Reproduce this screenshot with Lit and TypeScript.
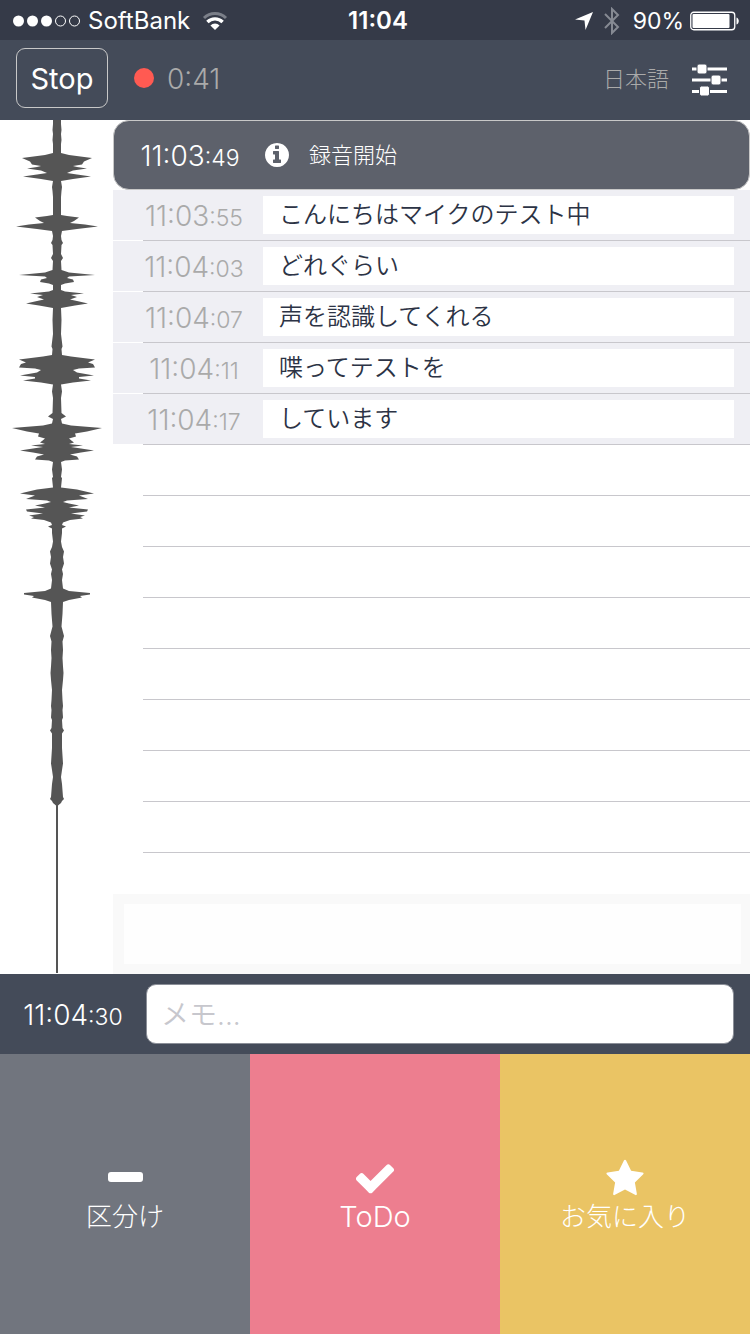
import { LitElement, html, css, svg } from "lit";
import { customElement, property, state } from "lit/decorators.js";

/* Amplitude envelope of the recording: [offset from the top, half width]. */
const ENVELOPE: [number, number][] = [
  [0, 4], [4, 4], [10, 4.5], [14, 4], [20, 4.5], [24, 4], [33, 4], [35, 12], [38, 35], [41.5, 27], [44.5, 25], [46, 16],
  [47, 20], [48.5, 30], [50.5, 16], [53, 10], [54.5, 20], [56.5, 34], [59, 16], [61, 4], [67, 5], [71, 4.5],
  [77, 4], [95, 4], [96, 10], [97.5, 22], [101, 17], [103, 13], [104.5, 28], [106.5, 41], [109, 20],
  [111, 5], [116, 4], [120, 4.5], [123, 6], [125, 4.5], [134, 4], [138, 6], [141, 4], [150, 4.5], [152.5, 12], [155, 38], [156.5, 12],
  [158, 10], [159.5, 16], [162, 17], [163.5, 8], [165, 4], [170, 4], [171.5, 8], [173.5, 27], [175, 14],
  [177, 20], [179.5, 13], [181, 20], [183.5, 31], [185.5, 18], [188, 4], [200, 4.5], [214, 4], [226.5, 5.5],
  [229, 4.5], [235, 5], [236.5, 14], [239.5, 38], [242.5, 31], [244, 36], [247.5, 38], [248.5, 22], [250, 16],
  [252.5, 20], [255.5, 37], [257, 22], [258.5, 22], [260.5, 34], [262.5, 16], [264.5, 4], [271.5, 5],
  [278, 4], [293, 4.5], [296.5, 9], [299, 4], [303.5, 5], [305.5, 14], [308, 45], [311.5, 30], [313.5, 18],
  [316.5, 19], [318.5, 12], [321, 15], [322.5, 17], [324, 12], [325.5, 26], [327, 14], [328.5, 24],
  [330.5, 37], [332.5, 24], [334.5, 13], [336.5, 20], [339.5, 22], [340.5, 8], [342, 4], [349.5, 5],
  [357, 4], [358, 5], [367.5, 4], [369.5, 20], [373.5, 37], [375.5, 22], [379, 31], [380.5, 10],
  [382, 6], [383.5, 12], [385.5, 22], [387.5, 12], [389.5, 31], [391.5, 30], [393.5, 14], [395.5, 28],
  [397, 23], [398.5, 26], [400, 13], [402.5, 6], [405, 5], [406.5, 9], [408.5, 5], [413, 5], [421.5, 4],
  [427, 5], [431.5, 7], [437, 6], [443.5, 7], [449.5, 5], [454, 6], [460, 5], [468.5, 6], [471, 12], [473, 33],
  [474.5, 33], [476, 23], [477.5, 25], [480, 12], [482, 6], [494, 5.5], [506.5, 4.5], [516, 7], [521.5, 5.5],
  [530, 6], [538, 5.5], [546.5, 6], [553, 6.5], [560, 6], [570, 5], [580, 5.5], [586, 6], [590, 5.5], [597.5, 6], [600, 5],
  [608, 5.5], [610.5, 7], [613.5, 5], [628, 5], [643.5, 6], [650, 5], [657, 4], [664, 5], [677, 6], [679, 7],
  [681, 5], [683, 4], [685.5, 1], [687, 1],
];

const envelopePoints = [
  ...ENVELOPE.map(([y, half]) => `${57 - half},${y}`),
  ...[...ENVELOPE].reverse().map(([y, half]) => `${57 + half},${y}`),
].join(" ");

const CHECK =
  "M1671 566q0 40-28 68l-724 724-136 136q-28 28-68 28t-68-28l-136-136-362-362q-28-28-28-68t28-68l136-136q28-28 68-28t68 28l294 295 656-657q28-28 68-28t68 28l136 136q28 28 28 68z";
const STAR =
  "M1728 647q0 22-26 48l-363 354 86 500q1 7 1 20 0 21-10.5 35.5t-30.5 14.5q-19 0-40-12l-449-236-449 236q-22 12-40 12-21 0-31.5-14.5t-10.5-35.5q0-6 2-20l86-500-364-354q-25-27-25-48 0-37 56-46l502-73 225-455q19-41 49-41t49 41l225 455 502 73q56 9 56 46z";
const INFO =
  "M1152 1376v-160q0-14-9-23t-23-9h-96v-512q0-14-9-23t-23-9h-320q-14 0-23 9t-9 23v160q0 14 9 23t23 9h96v320h-96q-14 0-23 9t-9 23v160q0 14 9 23t23 9h448q14 0 23-9t9-23zm-128-896v-160q0-14-9-23t-23-9h-192q-14 0-23 9t-9 23v160q0 14 9 23t23 9h192q14 0 23-9t9-23zm640 416q0 209-103 385.5t-279.5 279.5-385.5 103-385.5-103-279.5-279.5-103-385.5 103-385.5 279.5-279.5 385.5-103 385.5 103 279.5 279.5 103 385.5z";

@customElement("time-stamp")
class TimeStamp extends LitElement {
  @property() main = "";
  @property() sec = "";

  static styles = css`
    :host {
      display: block;
      padding-top: 4px;
      font-size: 28px;
      font-weight: 350;
      line-height: 36px;
      white-space: nowrap;
      text-align: center;
    }
    .sec {
      font-size: 23px;
    }
  `;

  render() {
    return html`<time>${this.main}<span class="sec">:${this.sec}</span></time>`;
  }
}

@customElement("status-bar")
class StatusBar extends LitElement {
  static styles = css`
    :host {
      box-sizing: border-box;
      display: grid;
      grid-template-columns: 1fr auto 1fr;
      align-items: center;
      height: 40px;
      padding: 1px 11px 0 13px;
      background: #353a48;
      color: #fff;
      font-size: 23px;
      line-height: 28px;
    }
    .side {
      display: flex;
      align-items: center;
    }
    .end {
      justify-content: flex-end;
    }
    .carrier {
      margin: 0 12px 0 8px;
      font-size: 24px;
    }
    .clock {
      padding-left: 4px;
      font-size: 24px;
      font-weight: 600;
    }
    .bluetooth {
      margin: 0 12px 0 10px;
    }
    .battery {
      margin-left: 6px;
    }
    svg {
      display: block;
      flex: none;
    }
  `;

  render() {
    return html`
      <div class="side">
        <svg width="67" height="12" viewBox="0 0 67 12">
          <g fill="#fff">
            <circle cx="5.5" cy="6" r="5.5" />
            <circle cx="19.5" cy="6" r="5.5" />
            <circle cx="33.5" cy="6" r="5.5" />
          </g>
          <g fill="none" stroke="#fff">
            <circle cx="47.5" cy="6" r="5" />
            <circle cx="61.5" cy="6" r="5" />
          </g>
        </svg>
        <span class="carrier">SoftBank</span>
        <svg width="26" height="20" viewBox="0 0 26 20" fill="none" stroke-width="3">
          <path d="M2 7a15.6 15.6 0 0 1 22 0" stroke="#7b7f89" />
          <path d="M5.4 11a10.8 10.8 0 0 1 15.2 0" stroke="#fff" stroke-width="3.4" />
          <path d="M13 19l-4.6-4.6a6.5 6.5 0 0 1 9.2 0z" fill="#fff" />
        </svg>
      </div>
      <span class="clock">11:04</span>
      <div class="side end">
        <svg width="18" height="18" viewBox="0 0 18 18">
          <path d="M18 0L10.5 18L9.5 8.5L0 7.5z" fill="#fff" />
        </svg>
        <svg class="bluetooth" width="18" height="28" viewBox="0 0 18 28">
          <path d="M2 7L15 20L9 26V2L15 8L2 21" fill="none" stroke="#868a93" stroke-width="2" />
        </svg>
        <span>90%</span>
        <svg class="battery" width="49" height="20" viewBox="0 0 49 20">
          <rect x="0.75" y="1.25" width="44" height="17.5" rx="3" fill="none" stroke="#fff" stroke-width="1.3" />
          <rect x="2.5" y="3" width="37" height="14" rx="1" fill="#fff" />
          <path d="M46.5 6.5c3 1 3 6 0 7z" fill="#fff" />
        </svg>
      </div>
    `;
  }
}

@customElement("wave-form")
class WaveForm extends LitElement {
  static styles = css`
    :host {
      display: flex;
      flex-direction: column;
      align-items: center;
      width: 113px;
    }
    svg {
      display: block;
      flex: none;
    }
    .tail {
      flex: 1;
      width: 2px;
      margin: 0 0 1px 1px;
      background: #555;
    }
  `;

  render() {
    return html`
      <svg width="113" height="687" viewBox="0 0 113 687">
        ${svg`<polygon points=${envelopePoints} fill="#555" />`}
      </svg>
      <div class="tail"></div>
    `;
  }
}

@customElement("app-root")
class AppRoot extends LitElement {
  @state() private entries = [
    { main: "11:03", sec: "55", text: "こんにちはマイクのテスト中" },
    { main: "11:04", sec: "03", text: "どれぐらい" },
    { main: "11:04", sec: "07", text: "声を認識してくれる" },
    { main: "11:04", sec: "11", text: "喋ってテストを" },
    { main: "11:04", sec: "17", text: "しています" },
  ];

  static styles = css`
    :host {
      display: flex;
      flex-direction: column;
      min-height: 100vh;
      background: #fff;
      font-family: Inter, "Noto Sans CJK JP", sans-serif;
    }
    * {
      box-sizing: border-box;
    }
    svg {
      display: block;
      flex: none;
    }
    button,
    input {
      margin: 0;
      font-family: inherit;
    }
    button {
      border: 0;
      padding: 0;
      background: none;
      cursor: pointer;
    }
    .toolbar {
      display: flex;
      align-items: center;
      height: 80px;
      padding: 0 23px 4px 16px;
      background: #444b59;
    }
    .stop {
      width: 92px;
      height: 60px;
      padding-top: 2px;
      border: 1px solid #c8c8c8;
      border-radius: 9px;
      color: #fff;
      font-size: 29px;
      line-height: 36px;
    }
    .dot {
      width: 20px;
      height: 20px;
      margin: 0 13px 0 26px;
      border-radius: 50%;
      background: #ff5a52;
    }
    .elapsed {
      flex: 1;
      padding-top: 2px;
      color: #aaa;
      font-size: 28px;
      font-weight: 350;
      line-height: 36px;
    }
    .language {
      margin-right: 23px;
      padding-top: 2px;
      color: #aaa;
      font-size: 22px;
      font-weight: 300;
      line-height: 36px;
    }
    .settings {
      padding-top: 4px;
    }
    .content {
      display: flex;
      flex: 1;
    }
    .log {
      display: flex;
      flex: 1;
      flex-direction: column;
      min-width: 0;
    }
    .started {
      display: flex;
      align-items: center;
      height: 70px;
      padding-left: 20px;
      border: 1px solid #c8c8c8;
      border-radius: 16px;
      background: #5d616b;
      color: #fff;
    }
    .started time-stamp {
      width: 112px;
    }
    .started svg {
      margin: 0 20px 0 19px;
    }
    .started-label {
      font-size: 22px;
      font-weight: 300;
      line-height: 36px;
    }
    .rows {
      flex: 1;
      margin: 0;
      padding: 0;
      list-style: none;
    }
    .row {
      display: flex;
      flex-direction: column;
      height: 51px;
    }
    .row::after {
      content: "";
      height: 1px;
      margin-left: 30px;
      background: #c8c7cc;
    }
    .entry {
      display: flex;
      flex: 1;
      align-items: center;
      padding: 0 16px 0 12px;
    }
    .filled .entry {
      background: #efeff4;
    }
    .entry time-stamp {
      width: 138px;
      color: #aaa;
    }
    .transcript {
      flex: 1;
      min-width: 0;
      height: 38px;
      padding-left: 16px;
      background: #fff;
      color: #2c3345;
      font-size: 24px;
      font-weight: 350;
      line-height: 38px;
      white-space: nowrap;
    }
    .pending {
      height: 80px;
      padding: 10px 9px 10px 11px;
      background: #f9f9f9;
    }
    .pending-text {
      height: 60px;
      background: #fefefe;
    }
    .memo {
      display: flex;
      align-items: center;
      height: 80px;
      padding: 0 16px 0 17px;
      background: #444b59;
      color: #fff;
    }
    .memo time-stamp {
      width: 112px;
      margin-right: 17px;
    }
    .memo-input {
      flex: 1;
      min-width: 0;
      height: 60px;
      padding: 2px 14px 0;
      border: 1px solid #8b8f98;
      border-radius: 10px;
      background: #fff;
      color: #2c3345;
      font-size: 28px;
      font-weight: 350;
    }
    .memo-input::placeholder {
      color: #c7c7cd;
      opacity: 1;
    }
    .actions {
      display: grid;
      grid-template-columns: repeat(3, 1fr);
      height: 280px;
    }
    .action {
      display: flex;
      flex-direction: column;
      align-items: center;
      justify-content: center;
      gap: 3px;
      padding-top: 2px;
      color: #fff;
      font-size: 26px;
      font-weight: 300;
      line-height: 36px;
    }
    .divide {
      background: #71757e;
    }
    .todo {
      background: #ed7e8f;
      font-size: 29px;
      font-weight: 350;
    }
    .favorite {
      background: #eac464;
    }
  `;

  render() {
    return html`
      <status-bar></status-bar>
      <header class="toolbar">
        <button class="stop">Stop</button>
        <span class="dot"></span>
        <span class="elapsed">0:41</span>
        <button class="language">日本語</button>
        <button class="settings" aria-label="設定">
          <svg width="35" height="32" viewBox="0 0 35 32" fill="#fff">
            <path d="M0 3.5h35v3H0zM0 14.5h35v3H0zM0 26h35v3H0z" />
            <g stroke="#444b59">
              <rect x="5" y="0" width="10" height="10" rx="2" />
              <rect x="19" y="11" width="10" height="10" rx="2" />
              <rect x="7.5" y="22" width="10" height="10" rx="2" />
            </g>
          </svg>
        </button>
      </header>
      <main class="content">
        <wave-form></wave-form>
        <section class="log">
          <div class="started">
            <time-stamp main="11:03" sec="49"></time-stamp>
            <svg width="24" height="24" viewBox="128 128 1536 1536"><path d=${INFO} fill="#fff" /></svg>
            <span class="started-label">録音開始</span>
          </div>
          <ul class="rows">
            ${this.entries.map(
              (e) => html`
                <li class="row filled">
                  <div class="entry">
                    <time-stamp main=${e.main} sec=${e.sec}></time-stamp>
                    <div class="transcript">${e.text}</div>
                  </div>
                </li>
              `
            )}
            ${Array.from({ length: 8 }, () => html`<li class="row"><div class="entry"></div></li>`)}
          </ul>
          <div class="pending"><div class="pending-text"></div></div>
        </section>
      </main>
      <form class="memo">
        <time-stamp main="11:04" sec="30"></time-stamp>
        <input class="memo-input" type="text" placeholder="メモ..." aria-label="メモ" />
      </form>
      <nav class="actions">
        <button class="action divide">
          <svg width="35" height="40" viewBox="0 0 35 40"><rect y="16" width="35" height="10" rx="3" fill="#fff" /></svg>
          区分け
        </button>
        <button class="action todo">
          <svg width="44" height="40" viewBox="0 0 1792 1629"><path d=${CHECK} fill="#fff" /></svg>
          ToDo
        </button>
        <button class="action favorite">
          <svg width="40" height="40" viewBox="0 -134 1792 1792"><path d=${STAR} fill="#fff" /></svg>
          お気に入り
        </button>
      </nav>
    `;
  }
}
